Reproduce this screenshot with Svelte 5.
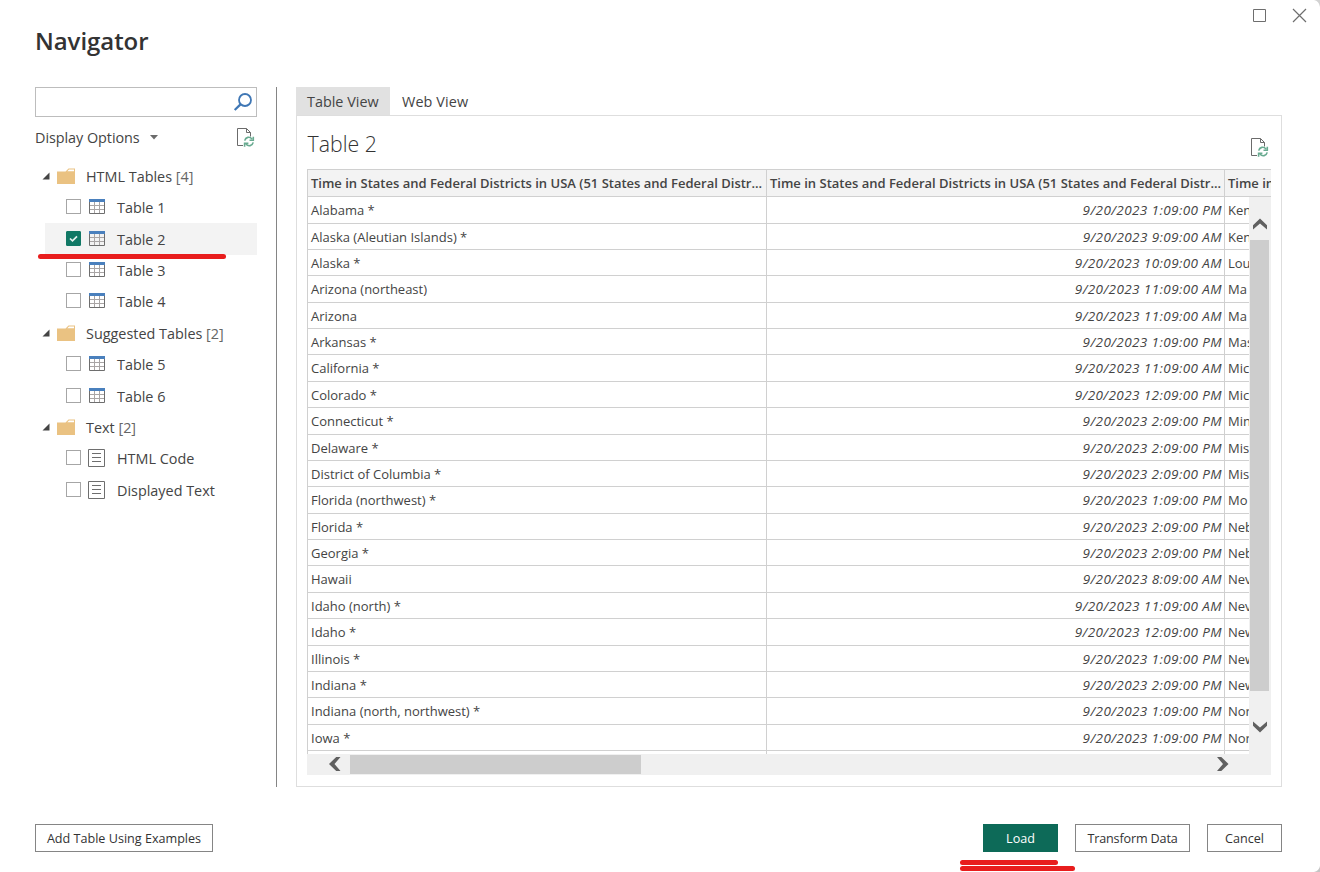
<script>
  const groups = [
    { name: 'HTML Tables', count: 4, kind: 'table', items: ['Table 1', 'Table 2', 'Table 3', 'Table 4'] },
    { name: 'Suggested Tables', count: 2, kind: 'table', items: ['Table 5', 'Table 6'] },
    { name: 'Text', count: 2, kind: 'text', items: ['HTML Code', 'Displayed Text'] }
  ];
  let selected = $state('Table 2');
  const heading = 'Time in States and Federal Districts in USA (51 States and Federal Distr...';
  const rows = [
    ['Alabama *', '1:09:00 PM', 'Ken'],
    ['Alaska (Aleutian Islands) *', '9:09:00 AM', 'Ken'],
    ['Alaska *', '10:09:00 AM', 'Lou'],
    ['Arizona (northeast)', '11:09:00 AM', 'Ma'],
    ['Arizona', '11:09:00 AM', 'Ma'],
    ['Arkansas *', '1:09:00 PM', 'Mas'],
    ['California *', '11:09:00 AM', 'Mic'],
    ['Colorado *', '12:09:00 PM', 'Mic'],
    ['Connecticut *', '2:09:00 PM', 'Min'],
    ['Delaware *', '2:09:00 PM', 'Mis'],
    ['District of Columbia *', '2:09:00 PM', 'Mis'],
    ['Florida (northwest) *', '1:09:00 PM', 'Mo'],
    ['Florida *', '2:09:00 PM', 'Neb'],
    ['Georgia *', '2:09:00 PM', 'Neb'],
    ['Hawaii', '8:09:00 AM', 'Nev'],
    ['Idaho (north) *', '11:09:00 AM', 'Nev'],
    ['Idaho *', '12:09:00 PM', 'New'],
    ['Illinois *', '1:09:00 PM', 'New'],
    ['Indiana *', '2:09:00 PM', 'New'],
    ['Indiana (north, northwest) *', '1:09:00 PM', 'Nor'],
    ['Iowa *', '1:09:00 PM', 'Nor']
  ];
</script>

{#snippet refresh()}
  <svg class="refresh" width="18" height="20" viewBox="0 0 18 20" fill="none">
    <path d="M6 17.5H.5V.5H9.500L13.500 4.500v4M9.500.5V4.500h4" stroke="#6b6b6b" />
    <path d="M7.700 12.700c.8-3.700 5-4.600 7.200-1.700M16.300 8.700v3.500h-3.800M16.200 14.300c-.8 3.700-5 4.600-7.200 1.700M7.600 18.700v-3.500h3.800" stroke="#69ab91" stroke-width="1.6" />
  </svg>
{/snippet}

<main>
  <svg class="winbtns" width="56" height="16" viewBox="0 0 56 16" fill="none" stroke="#6e6e6e">
    <path d="M.5 1.5h12v12H.5z" /><path d="M40 1l13 13M53 1L40 14" stroke-width="1.2" />
  </svg>
  <svg class="corner tr" width="6" height="7" viewBox="0 0 6 7"><path d="M0 0h6v7Q5 1 0 0" fill="#d2d2d2" /></svg>
  <svg class="corner br" width="6" height="6" viewBox="0 0 6 6"><path d="M6 0v6H0Q5 5 6 0" fill="#c4c4c4" /></svg>

  <h1>Navigator</h1>

  <div class="content">
    <aside>
      <div class="search">
        <svg width="20" height="20" viewBox="0 0 20 20" fill="none" stroke="#3f77b5" stroke-width="1.8"><circle cx="12" cy="7" r="6" /><path d="M7.500 11.400L1.700 17" stroke-width="2.2" /></svg>
      </div>
      <div class="options">
        <span>Display Options</span>
        <svg width="8" height="5" viewBox="0 0 8 5"><path d="M0 0h8L4 4.5z" fill="#6b6b6b" /></svg>
        {@render refresh()}
      </div>
      <div class="tree">
        {#each groups as group}
          <div class="group">
            <svg class="arrow" width="8" height="8" viewBox="0 0 8 8"><path d="M7.5 .5v7h-7z" fill="#444" /></svg>
            <svg class="folder" width="18" height="16" viewBox="0 0 18 16"><path d="M0 3.500h8.500l3-3H18V16H0z" fill="#eac282" /><path d="M10.300 3.300l1.700-1.800h5v1.800z" fill="#fff" /></svg>
            <span>{group.name} <em>[{group.count}]</em></span>
          </div>
          {#each group.items as item}
            <div class="item" class:selected={selected === item} onclick={() => (selected = item)} role="presentation">
              <i class="check">
                {#if selected === item}
                  <svg width="15" height="15" viewBox="0 0 15 15"><path d="M4 7.5l2.5 2.4L11 5.3" fill="none" stroke="#e6f2ef" stroke-width="1.7" /></svg>
                {/if}
              </i>
              {#if group.kind === 'table'}
                <svg class="kind" width="17" height="18" viewBox="0 0 17 18" fill="none">
                  <path d="M2 7.500h14M2 11.500h14M6.500 4v11M11.500 4v11" stroke="#a9a5a5" />
                  <path d="M1.500 3v12.500h15V3" stroke="#6e6e6e" /><path d="M1 1h16v3H1z" fill="#4a80bd" />
                </svg>
              {:else}
                <svg class="kind" width="17" height="18" viewBox="0 0 17 18" fill="none" stroke="#6e6e6e">
                  <path d="M.5 .5h16v17H.5zM4 4.500h9M4 8.500h9M4 12.500h9" />
                </svg>
              {/if}
              <span>{item}</span>
            </div>
          {/each}
        {/each}
        <b class="mark first"></b>
      </div>
    </aside>

    <section>
      <nav><span class="active">Table View</span><span class="web">Web View</span></nav>
      <div class="panel">
        <header><h2>Table 2</h2>{@render refresh()}</header>
        <div class="grid">
          <div class="head row"><span>{heading}</span><span>{heading}</span><span>Time in</span></div>
          <div class="middle">
            <div class="body">
              {#each rows as [name, time, other]}
                <div class="row"><span>{name}</span><span class="time">9/20/2023 {time}</span><span class="other">{other}</span></div>
              {/each}
              <div class="row"><span></span><span></span><span></span></div>
            </div>
            <div class="vbar">
              <svg width="14" height="12" viewBox="0 0 14 12"><path d="M0 11.500V7.200L7 .5l7 6.700V11.500L7 5.500z" fill="#606060" /></svg>
              <div class="vthumb"></div>
              <svg width="14" height="12" viewBox="0 0 14 12"><path d="M0 .5v4.300l7 6.700 7-6.700V.5L7 6.500z" fill="#606060" /></svg>
            </div>
          </div>
          <div class="hbar">
            <svg width="12" height="14" viewBox="0 0 12 14"><path d="M11.500 0H7.200L0 7l7.200 7h4.300l-6-7z" fill="#606060" /></svg>
            <div class="hthumb"></div>
            <svg width="12" height="14" viewBox="0 0 12 14"><path d="M0 0h4.300l7.200 7-7.200 7H0l6-7z" fill="#606060" /></svg>
          </div>
        </div>
      </div>
    </section>
  </div>

  <footer>
    <button class="add">Add Table Using Examples</button>
    <button class="load">Load</button>
    <button class="transform">Transform Data</button>
    <button class="cancel">Cancel</button>
    <b class="mark second"></b><b class="mark third"></b>
  </footer>
</main>

<style>
  :global(body) { margin: 0; background: #fff; overflow: hidden; }
  * { box-sizing: border-box; }
  main { position: relative; width: 1320px; height: 872px; overflow: hidden; background: #fff; color: #444; font-family: "Open Sans", "Noto Sans", sans-serif; font-size: 14.400px; display: flex; flex-direction: column; }
  svg { display: block; flex: none; }
  span { white-space: pre; }
  .winbtns { position: absolute; left: 1253px; top: 8px; }
  .corner { position: absolute; right: 0; }
  .tr { top: 0; }
  .br { bottom: 0; }
  h1 { margin: 0; padding: 24px 0 0 35px; height: 87px; font-size: 24px; line-height: 34px; font-weight: 600; letter-spacing: -.05px; color: #333; }
  .content { display: flex; height: 700px; padding-left: 35px; }
  aside { width: 242px; border-right: 1px solid #858585; padding-right: 19px; }
  .search { height: 30px; border: 1px solid #bdbdbd; display: flex; justify-content: flex-end; align-items: flex-start; padding: 5px 3px 0 0; }
  .options { height: 43.700px; display: flex; align-items: flex-start; padding-top: 10px; line-height: 21px; letter-spacing: -.05px; }
  .options > svg:nth-child(2) { margin: 8px 0 0 10px; }
  .options .refresh { margin: 1px 2px 0 auto; }
  .tree { position: relative; }
  .group, .item { height: 31.380px; display: flex; align-items: center; margin-left: 10px; }
  .arrow { margin-left: -4px; }
  .group { padding-left: 1px; }
  .folder { margin: -1px 11px 0 7px; }
  em { font-style: normal; color: #666; }
  .item { padding-left: 21px; }
  .selected { background: #f3f3f3; }
  .check { width: 15px; height: 15px; border: 1px solid #a6a6a6; background: #fff; margin-top: -2px; }
  .selected .check { background: #117865; border-color: #117865; border-radius: 1px; }
  .check svg { margin: -1px; }
  .kind { margin: -1px 12px 0 7px; }
  section { width: 986px; margin-left: 19px; display: flex; flex-direction: column; }
  nav { height: 28px; display: flex; line-height: 29px; }
  .active { width: 94px; background: #e1e1e1; padding-left: 11px; }
  .web { padding-left: 12px; letter-spacing: .1px; }
  .panel { flex: 1; border: 1px solid #dedede; padding: 0 10px 0 10px; }
  header { height: 53px; display: flex; justify-content: space-between; padding: 10px 2px 0 .5px; }
  header .refresh { margin-top: 12px; }
  h2 { margin: 0; font-weight: 300; font-size: 21.300px; line-height: 36px; color: #333; }
  .grid { width: 964px; font-size: 13px; }
  .row { display: grid; grid-template-columns: 459px 458px 1fr; }
  .row span { border-left: 1px solid #d0d0d0; border-bottom: 1px solid #d0d0d0; padding: 0 3px; overflow: hidden; height: 26.380px; line-height: 26px; }
  .head { background: #f3f3f3; border-top: 1px solid #d0d0d0; font-weight: 600; }
  .row.head span { height: 27px; padding-right: 0; }
  .middle { display: flex; height: 557px; }
  .body { width: 942px; overflow: hidden; padding-top: .150px; }
  .row .time { text-align: right; font-style: italic; font-size: 13.500px; letter-spacing: .4px; padding-right: 2px; }
  .row .other { padding-right: 0; }
  .vbar { width: 22px; background: #f0f0f0; display: flex; flex-direction: column; padding: 21px 0 0 1px; }
  .vbar svg { margin-left: 3px; }
  .vthumb { width: 19px; height: 451px; background: #cdcdcd; margin: 10px 0 30px; }
  .hbar { height: 21px; background: #f0f0f0; display: flex; align-items: flex-start; padding: 3px 42px 0 22px; }
  .hthumb { width: 291px; height: 19px; background: #cdcdcd; margin: -2px auto 0 9px; }
  footer { position: relative; display: flex; padding: 37px 38px 0 35px; }
  button { height: 28px; padding: 1px 0 0; border: 1px solid #858585; background: #fff; color: #333; font: 12.600px/25px "Open Sans", sans-serif; white-space: nowrap; }
  .add { width: 178px; margin-right: auto; }
  .load { width: 75px; background: #0d6a58; border-color: #0d6a58; color: #fff; }
  .transform { width: 115px; margin: 0 17px; letter-spacing: -.15px; }
  .cancel { width: 75px; }
  .mark { position: absolute; height: 5px; border-radius: 3px; background: #e81d1d; }
  .first { left: 3px; top: 93px; width: 188px; }
  .second { left: 960px; top: 73px; width: 98px; }
  .third { left: 960px; top: 79px; width: 115px; }
</style>
